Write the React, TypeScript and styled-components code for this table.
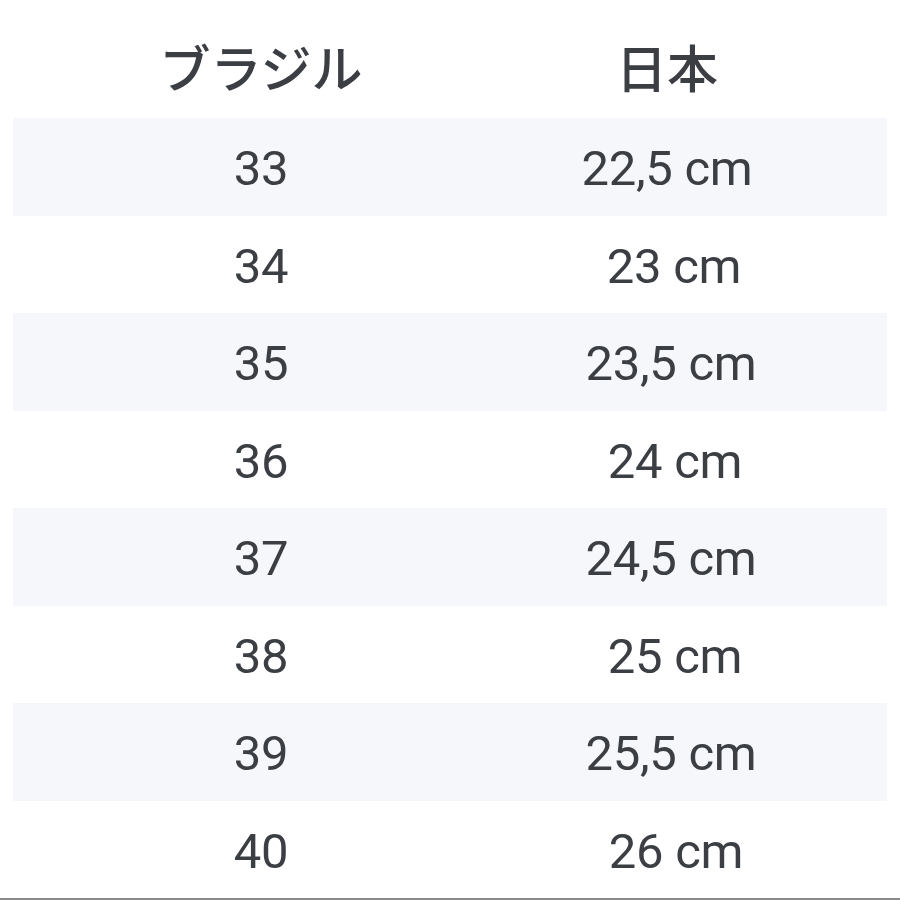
import React from "react";
import styled, { createGlobalStyle } from "styled-components";

const Global = createGlobalStyle`
  html, body { margin: 0; padding: 0; background: #ffffff; }
  body { width: 900px; height: 900px; overflow: hidden; }
`;

const Page = styled.div`
  width: 900px;
  height: 900px;
  box-sizing: border-box;
  padding: 0 13px;
  display: flex;
  flex-direction: column;
  border-bottom: 2px solid #8a8a8a;
  font-family: Roboto, "Noto Sans CJK JP", sans-serif;
  color: #3b3e43;
`;

const Row = styled.div<{ $shaded?: boolean; $header?: boolean }>`
  display: grid;
  grid-template-columns: 496px 316px 1fr;
  align-items: center;
  height: ${(p) => (p.$header ? "118px" : "97.5px")};
  box-sizing: border-box;
  padding-top: ${(p) => (p.$header ? "14px" : "4px")};
  background: ${(p) => (p.$shaded ? "#f5f7fa" : "transparent")};
`;

const HeadCell = styled.div`
  text-align: center;
  font-family: "Noto Sans CJK JP", sans-serif;
  font-size: 51px;
  font-weight: 500;
  line-height: 1;
`;

const Cell = styled.div<{ $shift?: number }>`
  text-align: center;
  font-size: 49px;
  line-height: 1;
  letter-spacing: -0.3px;
  transform: translateX(${(p) => p.$shift ?? 0}px);
`;

const rows: [string, string, number][] = [
  ["33", "22,5 cm", 0],
  ["34", "23 cm", 7],
  ["35", "23,5 cm", 4],
  ["36", "24 cm", 8],
  ["37", "24,5 cm", 4],
  ["38", "25 cm", 8],
  ["39", "25,5 cm", 4],
  ["40", "26 cm", 9],
];

export default function App() {
  return (
    <>
      <Global />
      <Page>
        <Row $header>
          <HeadCell>ブラジル</HeadCell>
          <HeadCell>日本</HeadCell>
        </Row>
        {rows.map(([a, b, s], i) => (
          <Row key={a} $shaded={i % 2 === 0}>
            <Cell>{a}</Cell>
            <Cell $shift={s}>{b}</Cell>
          </Row>
        ))}
      </Page>
    </>
  );
}
